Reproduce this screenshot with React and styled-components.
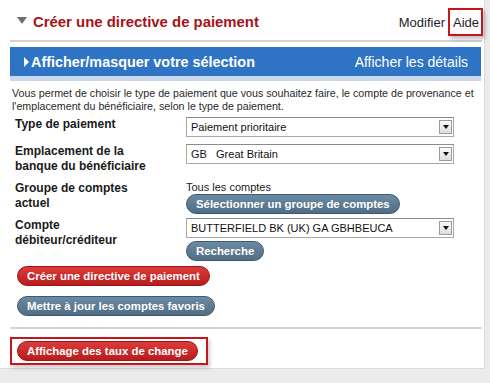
import React from "react";
import styled, { createGlobalStyle, css } from "styled-components";

const GlobalStyle = createGlobalStyle`
  body {
    margin: 0;
    background: #fff;
    font-family: "Liberation Sans", Arial, sans-serif;
  }
`;

const rows = [
  { label: "Type de paiement", value: "Paiement prioritaire" },
  { label: "Emplacement de la banque du bénéficiaire", value: "GB   Great Britain" },
];

const App = () => {
  return (
    <Page>
      <GlobalStyle />
      <Panel>
        <Header>
          <TitleWrap>
            <Caret />
            <Title>Créer une directive de paiement</Title>
          </TitleWrap>
          <Links>
            <LinkText>Modifier</LinkText>
            <Highlight>
              <LinkText>Aide</LinkText>
            </Highlight>
          </Links>
        </Header>
        <Rule />

        <Bar>
          <BarTitle>
            <BarArrow />
            Afficher/masquer votre sélection
          </BarTitle>
          <BarLink>Afficher les détails</BarLink>
        </Bar>

        <Intro>
          Vous permet de choisir le type de paiement que vous souhaitez faire, le compte de provenance et
          l'emplacement du bénéficiaire, selon le type de paiement.
        </Intro>

        <Form>
          {rows.map((row) => (
            <React.Fragment key={row.label}>
              <Label>{row.label}</Label>
              <Control>
                <Select>
                  <span>{row.value}</span>
                  <Arrow />
                </Select>
              </Control>
            </React.Fragment>
          ))}

          <Label>Groupe de comptes actuel</Label>
          <Control $tight>
            <Note>Tous les comptes</Note>
            <Pill>Sélectionner un groupe de comptes</Pill>
          </Control>

          <Label>Compte débiteur/créditeur</Label>
          <Control>
            <Select>
              <span>BUTTERFIELD BK (UK) GA GBHBEUCA</span>
              <Arrow />
            </Select>
            <Pill>Recherche</Pill>
          </Control>
        </Form>

        <Actions>
          <Pill $red>Créer une directive de paiement</Pill>
          <Pill>Mettre à jour les comptes favoris</Pill>
        </Actions>

        <Rule $bottom />

        <Footer>
          <BoxedAction>
            <Pill $red>Affichage des taux de change</Pill>
          </BoxedAction>
        </Footer>
      </Panel>
    </Page>
  );
};

const Page = styled.div`
  width: 490px;
  height: 383px;
  background: #ebebeb;
  overflow: hidden;
`;

const Panel = styled.div`
  width: 485px;
  height: 369px;
  background: #fff;
  border-right: 1px solid #dcdcdc;
  border-bottom: 1px solid #dcdcdc;
  box-sizing: border-box;
`;

const Header = styled.div`
  height: 40px;
  display: flex;
  align-items: center;
  justify-content: space-between;
  padding: 4px 1px 0 17px;
  box-sizing: border-box;
`;

const TitleWrap = styled.div`
  display: flex;
  align-items: center;
`;

const Caret = styled.span`
  width: 0;
  height: 0;
  border-left: 5px solid transparent;
  border-right: 5px solid transparent;
  border-top: 7px solid #6e6e6e;
  margin-right: 6px;
  margin-top: -4px;
`;

const Title = styled.h1`
  margin: 0;
  font-size: 14.9px;
  font-weight: bold;
  color: #a3141b;
`;

const Links = styled.div`
  display: flex;
  align-items: center;
  gap: 3px;
`;

const LinkText = styled.span`
  font-size: 13px;
  color: #1c1c2a;
`;

const Highlight = styled.span`
  border: 2px solid #c4161c;
  padding: 3px 2px 3px 3px;
  box-shadow: 2px 3px 4px rgba(0, 0, 0, 0.25);
`;

const Rule = styled.div`
  height: 2px;
  background: #d4d4d4;
  margin: ${(p) => (p.$bottom ? "11px 2px 0 10px" : "0 2px 0 10px")};
`;

const Bar = styled.div`
  margin: 5px 3px 0 10px;
  height: 29px;
  background: #2f74c4;
  border-bottom: 5px solid #c8d8ec;
  display: flex;
  align-items: center;
  justify-content: space-between;
  padding: 0 13px 0 14px;
  color: #fff;
`;

const BarTitle = styled.span`
  display: flex;
  align-items: center;
  font-weight: bold;
  font-size: 14.4px;
`;

const BarArrow = styled.span`
  width: 0;
  height: 0;
  border-top: 5px solid transparent;
  border-bottom: 5px solid transparent;
  border-left: 5px solid #fff;
  margin-right: 2px;
`;

const BarLink = styled.span`
  font-size: 14px;
`;

const Intro = styled.p`
  margin: 6px 0 0 12px;
  width: 468px;
  font-size: 10.7px;
  line-height: 13px;
  color: #2a2a2a;
`;

const Form = styled.div`
  display: grid;
  grid-template-columns: 171px 268px;
  row-gap: 7px;
  margin: 4px 0 0 15px;
`;

const Label = styled.div`
  font-size: 12px;
  font-weight: bold;
  line-height: 15px;
  color: #1a1a1a;
  width: 135px;
`;

const Control = styled.div`
  display: flex;
  flex-direction: column;
  align-items: flex-start;
  gap: ${(p) => (p.$tight ? "1px" : "3px")};
  margin-bottom: ${(p) => (p.$tight ? "-3px" : "0")};
`;

const Select = styled.div`
  width: 268px;
  height: 20px;
  box-sizing: border-box;
  border: 1px solid #a8a8a8;
  border-top-color: #8c8c8c;
  display: flex;
  align-items: center;
  justify-content: space-between;
  padding: 0 1px 0 4px;
  font-size: 11px;
  color: #111;
  white-space: pre;
`;

const Arrow = styled.span`
  width: 13px;
  height: 14px;
  box-sizing: border-box;
  border: 1px solid #9a9a9a;
  background: linear-gradient(#fafafa, #dedede);
  display: flex;
  align-items: center;
  justify-content: center;
  &::after {
    content: "";
    border-left: 3px solid transparent;
    border-right: 3px solid transparent;
    border-top: 4px solid #111;
  }
`;

const Note = styled.div`
  font-size: 11px;
  line-height: 12px;
  color: #1a1a1a;
`;

const Pill = styled.button`
  height: 20px;
  padding: 0 9px;
  border-radius: 10px;
  font-family: "Liberation Sans", Arial, sans-serif;
  font-size: 11.4px;
  font-weight: bold;
  color: #fff;
  cursor: pointer;
  white-space: nowrap;
  ${(p) =>
    p.$red
      ? css`
          background: linear-gradient(#dc3b3b, #b81c1c);
          border: 1px solid #9a1414;
        `
      : css`
          background: linear-gradient(#6c8aa2, #4f6d85);
          border: 1px solid #3f5a70;
        `}
`;

const Actions = styled.div`
  display: flex;
  flex-direction: column;
  align-items: flex-start;
  gap: 10px;
  margin: 5px 0 0 17px;
`;

const Footer = styled.div`
  padding: 8px 0 0 10px;
`;

const BoxedAction = styled.div`
  display: inline-flex;
  border: 2px solid #c4161c;
  padding: 2px 8px 2px 5px;
  box-shadow: 2px 3px 4px rgba(0, 0, 0, 0.2);
`;

export default App;
